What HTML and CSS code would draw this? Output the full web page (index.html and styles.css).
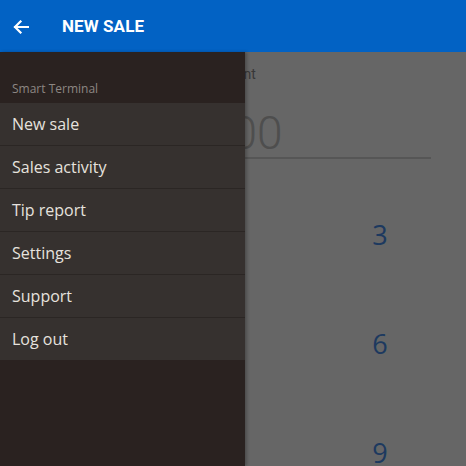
FILE: index.html
```html
<!DOCTYPE html>
<html>
<head>
<meta charset="utf-8">
<link rel="stylesheet" href="styles.css">
</head>
<body>
<div class="app">
  <header class="appbar">
    <svg class="back" width="16" height="14" viewBox="0 0 16 14"><path d="M15 7H2M7.5 1.5L2 7l5.5 5.5" fill="none" stroke="#fff" stroke-width="2.2" stroke-linecap="square"/></svg>
    <span class="title">NEW SALE</span>
  </header>
  <main class="content">
    <div class="label">Amount</div>
    <div class="amount">$0.00</div>
    <div class="rule"></div>
    <div class="keypad">
      <span>1</span><span>2</span><span>3</span>
      <span>4</span><span>5</span><span>6</span>
      <span>7</span><span>8</span><span>9</span>
    </div>
    <div class="scrim"></div>
  </main>
  <nav class="drawer">
    <div class="section">Smart Terminal</div>
    <ul class="menu">
      <li>New sale</li>
      <li>Sales activity</li>
      <li>Tip report</li>
      <li>Settings</li>
      <li>Support</li>
      <li>Log out</li>
    </ul>
  </nav>
</div>
</body>
</html>
```
FILE: styles.css
```css
* { box-sizing: border-box; }
html, body { margin: 0; padding: 0; }
body { width: 466px; height: 466px; overflow: hidden; font-family: "Open Sans", sans-serif; background: #fff; }
.app { position: relative; width: 466px; height: 466px; display: flex; flex-direction: column; }
.appbar { height: 52px; flex: none; background: #0262c4; display: flex; align-items: center; padding-left: 13px; }
.back { display: block; margin-top: 1px; }
.title { margin-left: 33px; color: #fff; font-family: Roboto, sans-serif; font-weight: 700; font-size: 17px; letter-spacing: 0.1px; }
.content { position: relative; flex: 1; min-height: 0; overflow: hidden; display: flex; flex-direction: column; align-items: center; background: #fff; }
.content > * { flex-shrink: 0; }
.label { margin-top: 14px; font-family: Roboto, sans-serif; font-size: 14px; color: #8c8c8c; margin-left: -4px; }
.amount { margin-top: 26px; margin-left: -14px; font-family: Roboto, sans-serif; font-weight: 300; font-size: 46px; line-height: 50px; color: #c2c2c2; }
.rule { margin-top: -1px; width: 396px; height: 2px; background: #d6d6d6; }
.keypad { margin-top: 36px; width: 438px; display: grid; grid-template-columns: repeat(3, 1fr); grid-auto-rows: 109px; justify-items: center; }
.keypad span { font-size: 27px; line-height: 80px; color: #4a90ee; }
.keypad span:nth-child(3n) { margin-left: 2px; }
.scrim { position: absolute; inset: 0; background: rgba(0,0,0,0.6); }
.drawer { position: absolute; left: 0; top: 52px; width: 245px; bottom: 0; background: #2a2220; box-shadow: 2px 0 3px rgba(0,0,0,0.25); }
.section { height: 51px; padding: 28px 0 0 12px; font-size: 12px; color: #8d8783; }
.menu { list-style: none; margin: 0; padding: 0; }
.menu li { height: 43px; display: flex; align-items: center; padding-left: 12px; background: #36312f; border-top: 1px solid #2b2624; font-size: 16px; color: #e6e2de; }
.menu li:first-child { border-top: none; height: 42px; }
```
